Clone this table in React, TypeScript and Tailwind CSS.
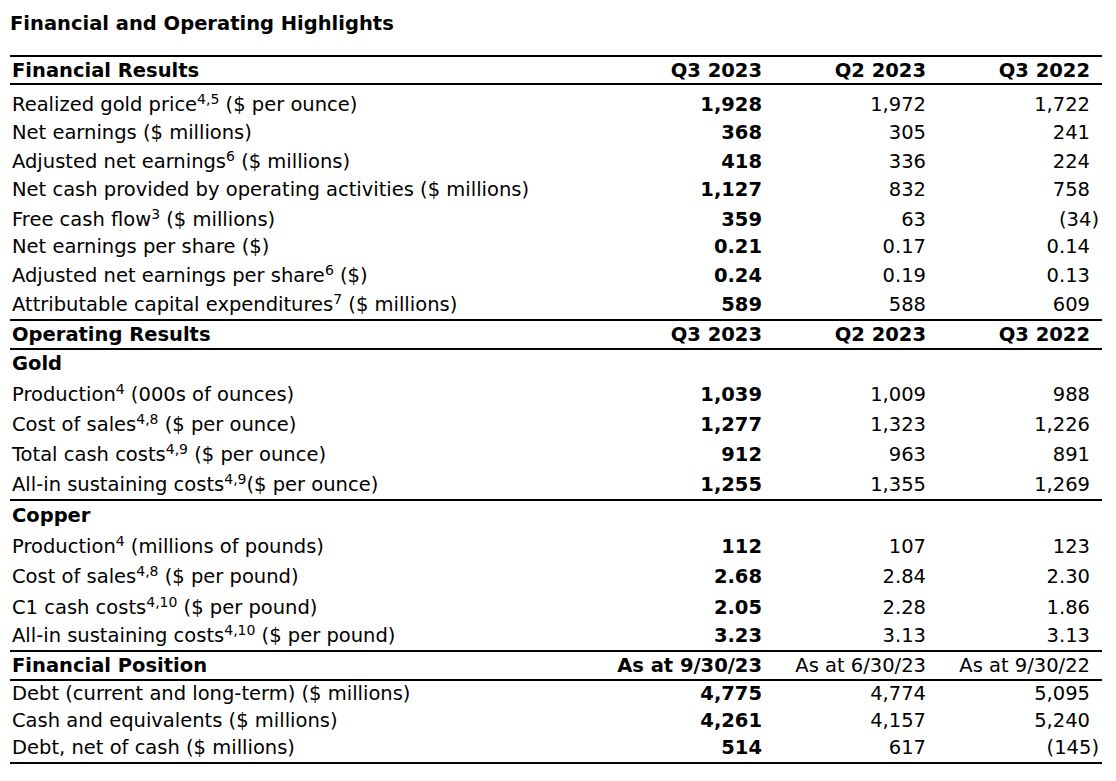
type Label = string | [string, string, string];

type Row = {
  label: Label;
  values: [string, string, string];
  h: string;
  kind?: "head" | "section";
  boldCols?: [boolean, boolean, boolean];
};

const head = (label: string, values: [string, string, string], h: string, boldCols: [boolean, boolean, boolean] = [true, true, true]): Row => ({
  label,
  values,
  h,
  kind: "head",
  boldCols,
});

const blocks: Row[][] = [
  [head("Financial Results", ["Q3 2023", "Q2 2023", "Q3 2022"], "h-[26px]")],
  [
    { label: ["Realized gold price", "4,5", " ($ per ounce)"], values: ["1,928", "1,972", "1,722"], h: "h-[34px]" },
    { label: "Net earnings ($ millions)", values: ["368", "305", "241"], h: "h-[28px]" },
    { label: ["Adjusted net earnings", "6", " ($ millions)"], values: ["418", "336", "224"], h: "h-[29px]" },
    { label: "Net cash provided by operating activities ($ millions)", values: ["1,127", "832", "758"], h: "h-[28px]" },
    { label: ["Free cash flow", "3", " ($ millions)"], values: ["359", "63", "(34)"], h: "h-[30px]" },
    { label: "Net earnings per share ($)", values: ["0.21", "0.17", "0.14"], h: "h-[27px]" },
    { label: ["Adjusted net earnings per share", "6", " ($)"], values: ["0.24", "0.19", "0.13"], h: "h-[29px]" },
    { label: ["Attributable capital expenditures", "7", " ($ millions)"], values: ["589", "588", "609"], h: "h-[29px]" },
  ],
  [head("Operating Results", ["Q3 2023", "Q2 2023", "Q3 2022"], "h-[27px]")],
  [
    { label: "Gold", values: ["", "", ""], h: "h-[28px]", kind: "section" },
    { label: ["Production", "4", " (000s of ounces)"], values: ["1,039", "1,009", "988"], h: "h-[31px]" },
    { label: ["Cost of sales", "4,8", " ($ per ounce)"], values: ["1,277", "1,323", "1,226"], h: "h-[30px]" },
    { label: ["Total cash costs", "4,9", " ($ per ounce)"], values: ["912", "963", "891"], h: "h-[30px]" },
    { label: ["All-in sustaining costs", "4,9", "($ per ounce)"], values: ["1,255", "1,355", "1,269"], h: "h-[30px]" },
  ],
  [
    { label: "Copper", values: ["", "", ""], h: "h-[29px]", kind: "section" },
    { label: ["Production", "4", " (millions of pounds)"], values: ["112", "107", "123"], h: "h-[31px]" },
    { label: ["Cost of sales", "4,8", " ($ per pound)"], values: ["2.68", "2.84", "2.30"], h: "h-[30px]" },
    { label: ["C1 cash costs", "4,10", " ($ per pound)"], values: ["2.05", "2.28", "1.86"], h: "h-[31px]" },
    { label: ["All-in sustaining costs", "4,10", " ($ per pound)"], values: ["3.23", "3.13", "3.13"], h: "h-[28px]" },
  ],
  [head("Financial Position", ["As at 9/30/23", "As at 6/30/23", "As at 9/30/22"], "h-[27px]", [true, false, false])],
  [
    { label: "Debt (current and long-term) ($ millions)", values: ["4,775", "4,774", "5,095"], h: "h-[27px]" },
    { label: "Cash and equivalents ($ millions)", values: ["4,261", "4,157", "5,240"], h: "h-[27px]" },
    { label: "Debt, net of cash ($ millions)", values: ["514", "617", "(145)"], h: "h-[27px]" },
  ],
];

function LabelText({ label }: { label: Label }) {
  if (typeof label === "string") return <>{label}</>;
  return (
    <>
      {label[0]}
      <sup className="text-[14px]">{label[1]}</sup>
      {label[2]}
    </>
  );
}

function Value({ text }: { text: string }) {
  // negatives hang the closing paren past the digit column
  if (text.endsWith(")")) {
    return (
      <span>
        {text.slice(0, -1)}
        <span className="-mr-[9px]">)</span>
      </span>
    );
  }
  return <span>{text}</span>;
}

function TableRow({ row }: { row: Row }) {
  const isHead = row.kind === "head";
  const align = isHead ? "items-center" : "items-end pb-[3px]";
  const bold = row.boldCols ?? [true, false, false];
  return (
    <div className={`grid grid-cols-[600px_164px_164px_164px] ${row.h} ${align}`}>
      <div className={`whitespace-nowrap pl-[2px] ${isHead || row.kind === "section" ? "font-bold" : ""}`}>
        <LabelText label={row.label} />
      </div>
      {row.values.map((value, index) => (
        <div key={index} className={`flex justify-end whitespace-nowrap pr-[12px] ${bold[index] ? "font-bold" : ""}`}>
          <Value text={value} />
        </div>
      ))}
    </div>
  );
}

export default function App() {
  return (
    <div className="min-h-[781px] w-[1116px] bg-white font-['DejaVu_Sans',Verdana,sans-serif] text-[19.5px] leading-[23px] text-black">
      <div className="h-[55px] pl-[10px] pt-[12px]">
        <h1 className="font-bold">Financial and Operating Highlights</h1>
      </div>
      <div className="ml-[10px] w-[1092px] border-t-2 border-black">
        {blocks.map((rows, index) => (
          <div key={index} className="border-b-2 border-black">
            {rows.map((row, rowIndex) => (
              <TableRow key={rowIndex} row={row} />
            ))}
          </div>
        ))}
      </div>
    </div>
  );
}
